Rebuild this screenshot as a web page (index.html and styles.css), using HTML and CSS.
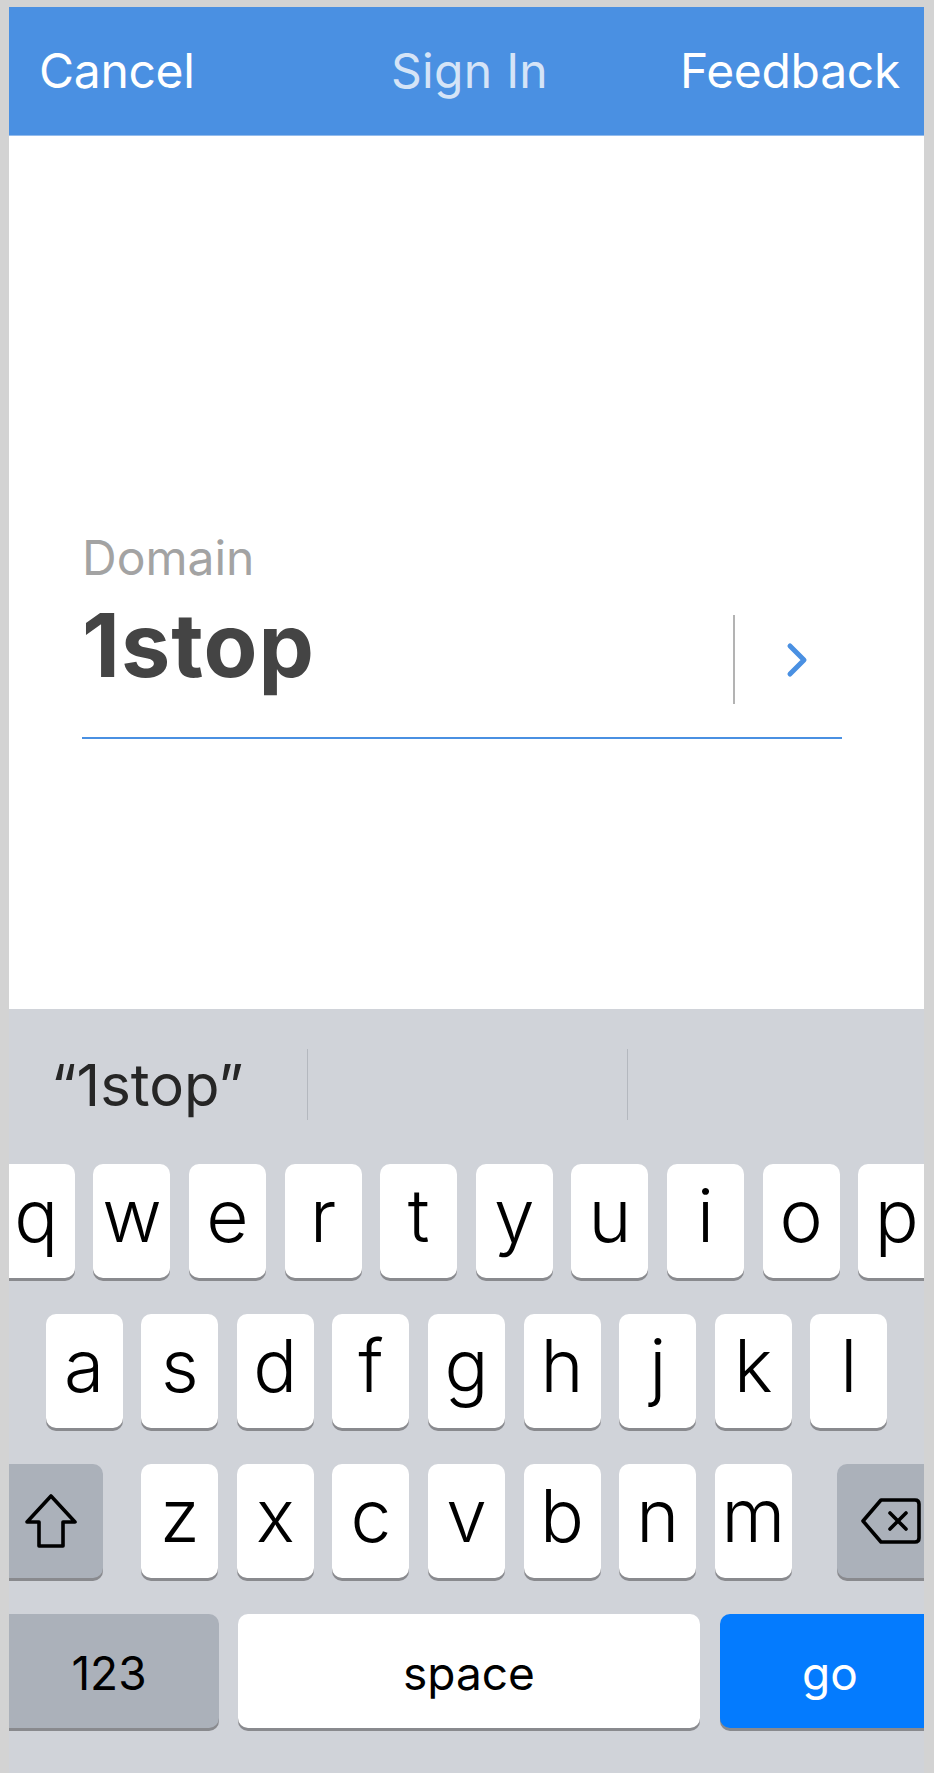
FILE: index.html
```html
<!DOCTYPE html>
<html lang="en">
<head>
    <meta charset="UTF-8">
    <meta name="viewport" content="width=device-width, initial-scale=1.0">
    <title>Sign In</title>
    <link rel="stylesheet" href="styles.css">
</head>
<body>
    <div class="phone">
        <header class="navbar">
            <span class="nav-btn">Cancel</span>
            <span class="nav-title">Sign In</span>
            <span class="nav-btn nav-right">Feedback</span>
        </header>

        <main class="content">
            <div class="field">
                <label class="field-label" for="domain">Domain</label>
                <div class="field-row">
                    <span class="field-value" id="domain">1stop</span>
                    <span class="field-divider"></span>
                    <svg class="next-arrow" viewBox="0 0 24 38" aria-hidden="true">
                        <polyline points="5,5 19,19 5,33" />
                    </svg>
                </div>
            </div>
        </main>

        <div class="keyboard">
            <div class="suggestions">
                <div class="suggestion first">&ldquo;1stop&rdquo;</div>
                <div class="suggestion"></div>
                <div class="suggestion last"></div>
            </div>
            <div class="keys">
                <div class="key-row">
                    <div class="key">q</div>
                    <div class="key">w</div>
                    <div class="key">e</div>
                    <div class="key">r</div>
                    <div class="key">t</div>
                    <div class="key">y</div>
                    <div class="key">u</div>
                    <div class="key">i</div>
                    <div class="key">o</div>
                    <div class="key">p</div>
                </div>
                <div class="key-row">
                    <div class="key">a</div>
                    <div class="key">s</div>
                    <div class="key">d</div>
                    <div class="key">f</div>
                    <div class="key">g</div>
                    <div class="key">h</div>
                    <div class="key">j</div>
                    <div class="key">k</div>
                    <div class="key">l</div>
                </div>
                <div class="key-row">
                    <div class="key key-fn key-shift">
                        <svg viewBox="0 0 56 58" aria-hidden="true">
                            <path d="M28 4 L52 30 H40 V54 H16 V30 H4 Z" />
                        </svg>
                    </div>
                    <div class="key">z</div>
                    <div class="key">x</div>
                    <div class="key">c</div>
                    <div class="key">v</div>
                    <div class="key">b</div>
                    <div class="key">n</div>
                    <div class="key">m</div>
                    <div class="key key-fn key-delete">
                        <svg viewBox="0 0 64 50" aria-hidden="true">
                            <path d="M22 4 H56 Q60 4 60 8 V42 Q60 46 56 46 H22 L4 25 Z" />
                            <path d="M31 17 L47 33 M47 17 L31 33" />
                        </svg>
                    </div>
                </div>
                <div class="key-row bottom-row">
                    <div class="key key-fn key-wide key-num">123</div>
                    <div class="key key-wide key-space">space</div>
                    <div class="key key-wide key-go">go</div>
                </div>
            </div>
        </div>
    </div>
</body>
</html>
```

FILE: styles.css
```css
body {
    margin: 0;
    padding: 0;
    background-color: #d3d3d3;
    font-family: 'Inter', 'Liberation Sans', sans-serif;
    overflow: hidden;
}
.phone {
    width: 915px;
    height: 1766px;
    margin: 7px 0 0 9px;
    background-color: #fff;
    display: flex;
    flex-direction: column;
    overflow: hidden;
}

/* top bar */
.navbar {
    flex: none;
    height: 128px;
    display: grid;
    grid-template-columns: 1fr auto 1fr;
    padding: 0 24px 0 30px;
    background-color: #4a90e2;
    border-bottom: 1px solid #93bbec;
    color: #fff;
    font-size: 48px;
    line-height: 128px;
    letter-spacing: -0.3px;
}
.nav-title {
    color: #d5e4f7;
    letter-spacing: 0.3px;
}
.nav-right {
    justify-self: end;
}

/* domain field */
.content {
    flex: none;
    height: 873px;
}
.field {
    margin: 394px 82px 0 73px;
}
.field-label {
    display: block;
    font-size: 48px;
    line-height: 56px;
    color: #a3a3a3;
}
.field-row {
    display: flex;
    align-items: flex-start;
    height: 147px;
    margin-top: 4px;
    border-bottom: 2px solid #4a90e2;
}
.field-value {
    flex: 1;
    font-size: 88px;
    font-weight: 700;
    line-height: 110px;
    letter-spacing: 1px;
    color: #444;
}
.field-divider {
    width: 2px;
    height: 89px;
    margin-top: 25px;
    background-color: #b3b3b3;
}
.next-arrow {
    flex: none;
    width: 24px;
    height: 38px;
    margin: 51px 33px 0 50px;
}
.next-arrow polyline {
    fill: none;
    stroke: #4a90e2;
    stroke-width: 5;
    stroke-linecap: round;
    stroke-linejoin: round;
}

/* keyboard */
.keyboard {
    flex: 1;
    background-color: #d0d3d9;
}
.suggestions {
    display: grid;
    grid-template-columns: 299px 320px 1fr;
    height: 155px;
    box-sizing: border-box;
    padding-top: 40px;
}
.suggestion {
    height: 71px;
    box-sizing: border-box;
    padding-top: 2px;
    border-right: 1px solid #b4b8bf;
    font-size: 58px;
    line-height: 69px;
    color: #262626;
}
.suggestion.first {
    padding-left: 42px;
}
.suggestion.last {
    border-right: none;
}
.keys {
    display: flex;
    flex-direction: column;
    gap: 36px;
}
.key-row {
    display: flex;
    justify-content: center;
    gap: 18.6px;
    height: 114px;
}
.key {
    flex: none;
    width: 77px;
    height: 114px;
    border-radius: 10px;
    background-color: #fff;
    box-shadow: 0 3px 0 #898a8e;
    font-size: 73px;
    font-weight: 300;
    line-height: 104px;
    text-align: center;
    color: #000;
}
.key-fn {
    background-color: #abb1ba;
    display: flex;
    align-items: center;
}
.key-fn svg path {
    fill: none;
    stroke: #000;
    stroke-width: 3.6;
    stroke-linejoin: round;
    stroke-linecap: round;
}
.key-shift {
    width: 120px;
    margin-right: 19.4px;
    justify-content: flex-end;
    box-sizing: border-box;
    padding-right: 24px;
}
.key-shift svg {
    width: 56px;
    height: 58px;
}
.key-delete {
    width: 113px;
    margin-left: 26.4px;
    box-sizing: border-box;
    padding-left: 22px;
}
.key-delete svg {
    width: 64px;
    height: 50px;
}
.bottom-row {
    gap: 19.5px;
}
.key-wide {
    box-sizing: border-box;
    padding-top: 4px;
    font-size: 46px;
    font-weight: 400;
    line-height: 110px;
}
.key-num {
    width: 235px;
    display: block;
    padding-left: 16px;
}
.key-space {
    width: 462px;
}
.key-go {
    width: 230px;
    padding-right: 9px;
    background-color: #047bfe;
    color: #fff;
}
```
